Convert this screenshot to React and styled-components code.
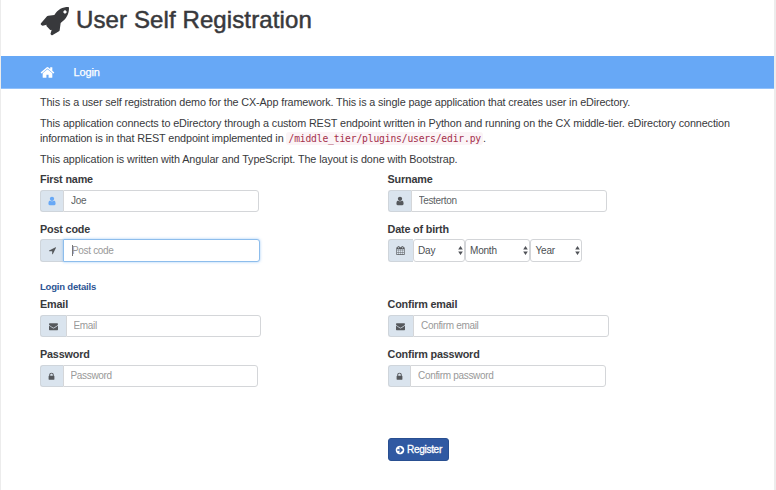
import React from "react";
import styled, { createGlobalStyle, css } from "styled-components";

const GlobalStyle = createGlobalStyle`
  * { box-sizing: border-box; }
  body {
    margin: 0;
    background: #fff;
    color: #38393c;
    font-family: "Liberation Sans", Arial, sans-serif;
    overflow: hidden;
  }
`;

const Page = styled.div`
  height: 490px;
  border-left: 1px solid #ececec;
  border-right: 2px solid #ececec;
`;

const Header = styled.header`
  height: 56px;
  display: flex;
  align-items: flex-start;
  padding: 5px 0 0 39px;
  svg {
    margin-top: 1px;
  }
`;

const Title = styled.h1`
  margin: 0 0 0 6px;
  font-size: 24px;
  line-height: 30px;
  font-weight: 400;
  letter-spacing: 0.11px;
  -webkit-text-stroke: 0.5px #38393c;
  white-space: nowrap;
`;

const Nav = styled.nav`
  height: 33px;
  display: flex;
  align-items: center;
  padding-left: 38.5px;
  background: #67a8f6;
  border-bottom: 1px solid #91c1fb;
  color: #fff;
`;

const NavLink = styled.a`
  margin-left: 19px;
  font-size: 11px;
  letter-spacing: -0.15px;
  -webkit-text-stroke: 0.25px #fff;
`;

const Main = styled.main`
  padding: 6px 0 0 39px;
`;

const Paragraph = styled.p`
  margin: 0 0 6px;
  font-size: 10.8px;
  line-height: 15px;
  letter-spacing: ${(p) => p.$track || 0}px;
  white-space: nowrap;
`;

const Code = styled.code`
  padding: 1px 2px;
  border-radius: 3px;
  background: #fbf4f6;
  color: #a5304c;
  font-family: "DejaVu Sans Mono", monospace;
  font-size: 9.7px;
  letter-spacing: -0.17px;
`;

const Columns = styled.div`
  display: grid;
  grid-template-columns: 347.5px 347.5px;
  row-gap: 6px;
`;

const Field = styled.div`
  display: flex;
  flex-direction: column;
  align-items: flex-start;
  height: 44px;
`;

const Label = styled.label`
  height: 17px;
  font-size: 10.8px;
  line-height: 13px;
  font-weight: 700;
  letter-spacing: -0.17px;
  white-space: nowrap;
`;

const InputGroup = styled.div`
  position: relative;
  display: flex;
  height: ${(p) => (p.$tall ? 23 : 22)}px;
  margin-top: ${(p) => (p.$tall ? -1 : 0)}px;
`;

const Addon = styled.span`
  width: ${(p) => p.$width}px;
  display: flex;
  align-items: center;
  justify-content: center;
  background: #dae4ee;
  border: 1px solid #cfd5db;
  border-right: 0;
  border-radius: 3px 0 0 3px;
  color: ${(p) => p.$color || "#55585c"};
`;

const TextInput = styled.input`
  width: ${(p) => p.$width}px;
  padding: 0 0 1px 7px;
  border: 1px solid #d4d6d9;
  border-radius: 0 3px 3px 0;
  outline: 0;
  background: #fff;
  color: #5c5f63;
  font-family: inherit;
  font-size: 10px;
  letter-spacing: -0.32px;
  &::placeholder {
    color: #999;
    opacity: 1;
  }
  ${(p) =>
    p.$active &&
    css`
      padding-left: 8px;
      border-color: #8dbdec;
      box-shadow: 0 0 3px rgba(102, 170, 240, 0.6);
    `}
`;

const Caret = styled.span`
  position: absolute;
  left: 32px;
  top: 6px;
  width: 1px;
  height: 11px;
  background: #777;
`;

const Select = styled.div`
  width: ${(p) => p.$width}px;
  display: flex;
  align-items: center;
  justify-content: space-between;
  padding: 0 1px 1px 4.5px;
  border: 1px solid #d3d5d8;
  border-radius: 3px;
  background: #fff;
  color: #4c4f53;
  font-size: 10px;
  letter-spacing: -0.2px;
`;

const SectionTitle = styled.h2`
  height: 19px;
  margin: 12px 0 0;
  font-size: 9.5px;
  line-height: 15px;
  font-weight: 700;
  letter-spacing: -0.2px;
  color: #2c5594;
`;

const Actions = styled.div`
  display: flex;
  padding: 46px 0 0 348px;
`;

const Button = styled.button`
  width: 61px;
  height: 23px;
  display: flex;
  align-items: center;
  justify-content: center;
  gap: 2.5px;
  padding: 0 0.5px 0 0;
  border: 1px solid #294f91;
  border-radius: 3px;
  background: #3059a2;
  color: #fff;
  font-family: inherit;
  font-size: 10px;
  letter-spacing: -0.3px;
  -webkit-text-stroke: 0.3px #fff;
`;

const paths = {
  home:
    "M1472 992v480q0 26-19 45t-45 19h-384v-384h-256v384h-384q-26 0-45-19t-19-45v-480q0-1 .5-3t.5-3l575-474 575 474q1 2 1 6zm223-69l-62 74q-8 9-21 11h-3q-13 0-21-7l-692-577-692 577q-12 8-24 7-13-2-21-11l-62-74q-8-10-7-23.5t11-21.5l719-599q32-26 76-26t76 26l244 204v-195q0-14 9-23t23-9h192q14 0 23 9t9 23v408l219 182q10 8 11 21.5t-7 23.5z",
  user:
    "M1536 1399q0 109-62.5 187t-150.5 78h-854q-88 0-150.5-78t-62.5-187q0-85 8.5-160.5t31.5-152 58.5-131 94-89 134.5-34.5q131 128 313 128t313-128q76 0 134.5 34.5t94 89 58.5 131 31.5 152 8.5 160.5zm-256-887q0 159-112.5 271.5t-271.5 112.5-271.5-112.5-112.5-271.5 112.5-271.5 271.5-112.5 271.5 112.5 112.5 271.5z",
  arrow:
    "M1593 349l-640 1280q-17 35-57 35-5 0-15-2-22-5-35.5-22.5t-13.5-39.5v-576h-576q-22 0-39.5-13.5t-22.5-35.5 4-42 29-30l1280-640q13-7 29-7 27 0 45 19 15 14 18.5 34.5t-6.5 39.5z",
  lock:
    "M640 768h512v-192q0-106-75-181t-181-75-181 75-75 181v192zm832 96v576q0 40-28 68t-68 28h-960q-40 0-68-28t-28-68v-576q0-40 28-68t68-28h32v-192q0-184 132-316t316-132 316 132 132 316v192h32q40 0 68 28t28 68z",
  envelope:
    "M1792 710v794q0 66-47 113t-113 47h-1472q-66 0-113-47t-47-113v-794q44 49 101 87 362 246 497 345 57 42 92.5 65.5t94.5 48 110 24.5h2q51 0 110-24.5t94.5-48 92.5-65.5q170-123 498-345 57-39 100-87zm0-294q0 79-49 151t-122 123q-376 261-468 325-10 7-42.5 31t-54 38.5-52 32.5-57.5 27-50 9h-2q-23 0-50-9t-57.5-27-52-32.5-54-38.5-42.5-31q-91-64-262-182.5t-205-142.5q-62-42-117-115.5t-55-136.5q0-78 41.5-130t118.5-52h1472q65 0 112.5 47t47.5 113z",
  calendar:
    "M192 1664h288v-288h-288v288zm352 0h320v-288h-320v288zm-352-352h288v-320h-288v320zm352 0h320v-320h-320v320zm-352-384h288v-288h-288v288zm736 736h320v-288h-320v288zm-384-736h320v-288h-320v288zm768 736h288v-288h-288v288zm-384-352h320v-320h-320v320zm-352-864v-288q0-13-9.5-22.5t-22.5-9.5h-64q-13 0-22.5 9.5t-9.5 22.5v288q0 13 9.5 22.5t22.5 9.5h64q13 0 22.5-9.5t9.5-22.5zm736 864h288v-320h-288v320zm-384-384h320v-288h-320v288zm384 0h288v-288h-288v288zm32-480v-288q0-13-9.5-22.5t-22.5-9.5h-64q-13 0-22.5 9.5t-9.5 22.5v288q0 13 9.5 22.5t22.5 9.5h64q13 0 22.5-9.5t9.5-22.5zm384-64v1280q0 52-38 90t-90 38h-1408q-52 0-90-38t-38-90v-1280q0-52 38-90t90-38h128v-96q0-66 47-113t113-47h64q66 0 113 47t47 113v96h384v-96q0-66 47-113t113-47h64q66 0 113 47t47 113v96h128q52 0 90 38t38 90z",
  circleRight:
    "M1413 896q0-27-18-45l-91-91-271-271-91-91q-18-18-45-18t-45 18l-91 91q-18 18-18 45t18 45l189 189h-502q-26 0-45 19t-19 45v128q0 26 19 45t45 19h502l-189 189q-19 19-19 45t19 45l91 91q18 18 45 18t45-18l362-362 91-91q18-18 18-45zm251 0q0 209-103 385.5t-279.5 279.5-385.5 103-385.5-103-279.5-279.5-103-385.5 103-385.5 279.5-279.5 385.5-103 385.5 103 279.5 279.5 103 385.5z",
};

const Icon = ({ name, size, viewBox = "0 0 1792 1792" }) => (
  <svg width={size} height={size} viewBox={viewBox} fill="currentColor" aria-hidden="true">
    <path d={paths[name]} />
  </svg>
);

const Rocket = () => (
  <svg width="30" height="30" viewBox="12 12 90 90" fill="currentColor" aria-hidden="true">
    <path
      fillRule="evenodd"
      d="M97 15Q99 15 99 18C99 36 92 50 74 63L71 85Q71 87 69 88L50 99Q48 101 46 99L44 97Q43 96 44 94L47 83Q44 85 42 83L32 73Q30 71 32 68L20 71Q18 71 17 70L15 68Q13 66 15 64L33 43Q34 41 37 41L55 39C66 22 79 15 97 15zM87 25a5 5 0 1 0 .01 0z"
    />
  </svg>
);

const Arrows = () => (
  <svg width="5" height="9" viewBox="0 0 5 9" fill="#505358" aria-hidden="true">
    <path d="M2.5 0 4.8 3.6H.2zM2.5 9 .2 5.4h4.6z" />
  </svg>
);

function TextField({ label, icon, iconSize = 9, iconColor, addon, width, active, ...input }) {
  return (
    <Field>
      <Label>{label}</Label>
      <InputGroup $tall={active}>
        <Addon $width={addon} $color={iconColor}>
          <Icon name={icon} size={iconSize} />
        </Addon>
        <TextInput $width={width} $active={active} aria-label={label} readOnly {...input} />
        {active && <Caret />}
      </InputGroup>
    </Field>
  );
}

export default function App() {
  return (
    <>
      <GlobalStyle />
      <Page>
        <Header>
          <Rocket />
          <Title>User Self Registration</Title>
        </Header>
        <Nav>
          <Icon name="home" size={15} />
          <NavLink>Login</NavLink>
        </Nav>
        <Main>
          <Paragraph $track={-0.124}>
            This is a user self registration demo for the CX-App framework. This is a single page application that creates user in eDirectory.
          </Paragraph>
          <Paragraph $track={-0.104}>
            This application connects to eDirectory through a custom REST endpoint written in Python and running on the CX middle-tier. eDirectory connection
            <br />
            information is in that REST endpoint implemented in <Code>/middle_tier/plugins/users/edir.py</Code>.
          </Paragraph>
          <Paragraph $track={-0.09}>This application is written with Angular and TypeScript. The layout is done with Bootstrap.</Paragraph>
          <Columns>
            <TextField label="First name" icon="user" iconSize={10} iconColor="#67a8f6" addon={23} width={196} defaultValue="Joe" />
            <TextField label="Surname" icon="user" iconSize={10} addon={23} width={196} defaultValue="Testerton" />
            <TextField label="Post code" icon="arrow" addon={23} width={197} placeholder="Post code" active />
            <Field>
              <Label>Date of birth</Label>
              <InputGroup $tall>
                <Addon $width={25}>
                  <Icon name="calendar" size={9} />
                </Addon>
                <Select $width={52}>Day<Arrows /></Select>
                <Select $width={65.5}>Month<Arrows /></Select>
                <Select $width={52}>Year<Arrows /></Select>
              </InputGroup>
            </Field>
          </Columns>
          <SectionTitle>Login details</SectionTitle>
          <Columns>
            <TextField label="Email" icon="envelope" addon={25.5} width={195.5} placeholder="Email" />
            <TextField label="Confirm email" icon="envelope" addon={25.5} width={195.5} placeholder="Confirm email" />
            <TextField label="Password" icon="lock" addon={22.5} width={195.5} placeholder="Password" />
            <TextField label="Confirm password" icon="lock" addon={22.5} width={195.5} placeholder="Confirm password" />
          </Columns>
          <Actions>
            <Button>
              <Icon name="circleRight" size={10} />
              Register
            </Button>
          </Actions>
        </Main>
      </Page>
    </>
  );
}
